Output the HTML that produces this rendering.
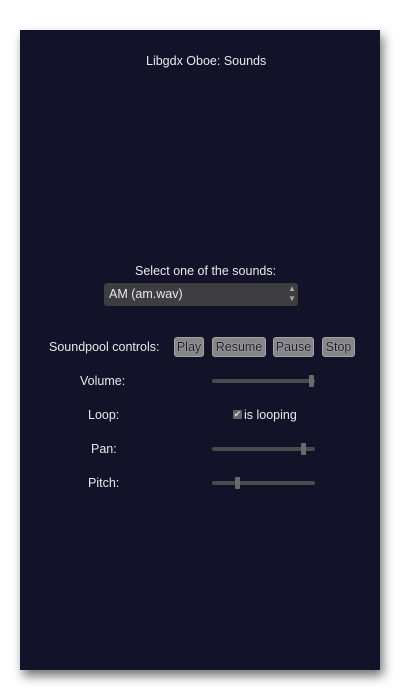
<!DOCTYPE html>
<html><head><style>
body{margin:0;width:400px;height:700px;background:#fff;position:relative;overflow:hidden;font-family:"Liberation Sans",sans-serif;color:#e8e8ea;font-size:12.5px}
#p{position:absolute;left:20px;top:30px;width:360px;height:640px;background:#121229;box-shadow:3px 6px 10px rgba(0,0,0,.55)}
.t{position:absolute;white-space:nowrap}
.btn{position:absolute;top:337px;height:20px;background:#86868a;border:1px solid #a4a4a6;border-radius:3px;box-sizing:border-box;color:#1a1a20;text-align:center;line-height:18px;font-size:12.5px;text-shadow:0 0 1px #eee}
.tr{position:absolute;left:212px;width:103px;height:4px;background:#4a4a4c;border-radius:2px}
.kn{position:absolute;width:5px;height:12px;background:#6a6a6c;border-radius:1px}
</style></head><body>
<div id="p"></div>
<div class="t" style="left:146px;top:54px">Libgdx Oboe: Sounds</div>
<div class="t" style="left:135px;top:264px">Select one of the sounds:</div>
<div style="position:absolute;left:104px;top:283px;width:194px;height:23px;background:#3e3e40;border-radius:3px"></div>
<div class="t" style="left:109px;top:287px">AM (am.wav)</div>
<div class="t" style="left:288px;top:284px;font-size:8px;color:#aaa;line-height:10px">▲<br>▼</div>
<div class="t" style="left:49px;top:340px">Soundpool controls:</div>
<div class="btn" style="left:174px;width:30px">Play</div>
<div class="btn" style="left:212px;width:54px">Resume</div>
<div class="btn" style="left:273px;width:41px">Pause</div>
<div class="btn" style="left:322px;width:33px">Stop</div>
<div class="t" style="left:80px;top:374px">Volume:</div>
<div class="tr" style="top:379px"></div><div class="kn" style="left:309px;top:375px"></div>
<div class="t" style="left:88px;top:408px">Loop:</div>
<div style="position:absolute;left:233px;top:410px;width:9px;height:9px;background:#666;border-radius:1px;color:#ddd;font-size:9px;line-height:9px;text-align:center">✔</div>
<div class="t" style="left:244px;top:408px">is looping</div>
<div class="t" style="left:91px;top:442px">Pan:</div>
<div class="tr" style="top:447px"></div><div class="kn" style="left:301px;top:443px"></div>
<div class="t" style="left:88px;top:476px">Pitch:</div>
<div class="tr" style="top:481px"></div><div class="kn" style="left:235px;top:477px"></div>
</body></html>
